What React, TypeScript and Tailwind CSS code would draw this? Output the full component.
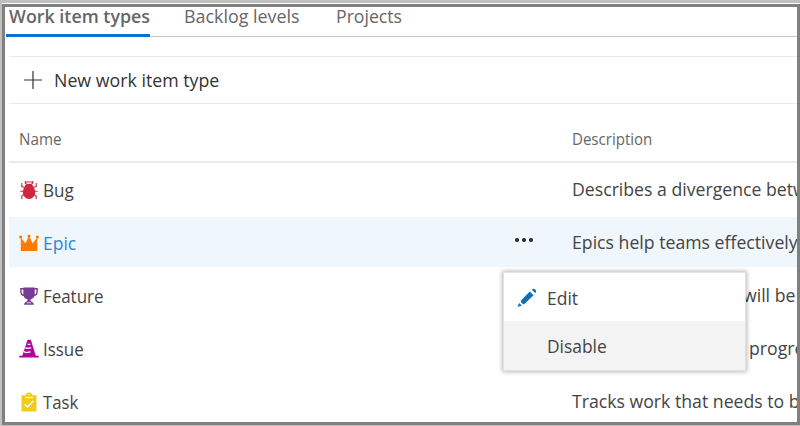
import type { ReactNode } from "react";

function BugIcon() {
  return (
    <svg viewBox="0 0 18 20" className="h-5 w-[18px]" fill="none" stroke="#cc293d" strokeWidth="1.1">
      <path d="M5.3 1v2.2l1.7 1.3M12.7 1v2.2L11 4.5M5.3 2h7.4M5 7.6 1.8 6.5V3M13 7.6l3.2-1.1V3M4 11.2H.3M14 11.2h3.7M4.2 14.2 1.8 16v3M13.8 14.2l2.4 1.8v3" />
      <path d="M4.6 6.8C5 2.6 13 2.6 13.4 6.8Z" fill="#cc293d" stroke="none" />
      <ellipse cx="9" cy="12" rx="6.2" ry="7" fill="#cc293d" stroke="none" />
    </svg>
  );
}

function CrownIcon() {
  return (
    <svg viewBox="0 0 20 18" className="h-[18px] w-5" fill="#ff7b00">
      <path d="M1.8 17V3.5L6.4 9.5 10 1.8l3.6 7.7 4.6-6V17Z" />
      <circle cx="1.6" cy="3" r="1.5" />
      <circle cx="10" cy="2" r="1.5" />
      <circle cx="18.4" cy="3" r="1.5" />
    </svg>
  );
}

function TrophyIcon() {
  return (
    <svg viewBox="0 0 18 18" className="h-[18px] w-[18px]" fill="#773b93">
      <path d="M3.3.5h11.4v6.2c0 3.6-2 5-4.2 5.6v1.2c0 1 3.4 1.4 3.4 4.2H4.1c0-2.8 3.4-3.2 3.4-4.2v-1.2c-2.2-.6-4.2-2-4.2-5.6Z" />
      <path d="M4 1.8H.9v2.7c0 2.6 1.7 4 4.2 4M14 1.8h3.1v2.7c0 2.6-1.7 4-4.2 4" fill="none" stroke="#773b93" strokeWidth="1.4" />
      <path d="M6.8 15.8h4.4" stroke="#fff" strokeWidth=".8" />
    </svg>
  );
}

function ConeIcon() {
  return (
    <svg viewBox="0 0 20 19" className="h-[19px] w-5" fill="#b4009e">
      <path d="M8.6.7h3.2L16.8 16.8h2.9v1.6H.3v-1.6h3Z" />
      <path d="M8.6 5.4h2.8M6.4 8.6l1.6.8 4.2-.6M5 12.6l2 1 4.6-.8" fill="none" stroke="#fff" strokeWidth="1.2" />
    </svg>
  );
}

function ClipboardIcon() {
  return (
    <svg viewBox="0 0 16 20" className="h-5 w-4">
      <path d="M.5 3.2H4.5C5 1.7 6 .5 8 .5s3 1.2 3.5 2.7h4v16.3H.5Z" fill="#f2cb1d" />
      <path d="M4.3 5.6h7.4M7.3 3h1.4" stroke="#fff" strokeWidth="1" />
      <path d="m3.8 12.3 2.8 2.8 5.6-6" fill="none" stroke="#fff" strokeWidth="1.4" />
    </svg>
  );
}

function PencilIcon() {
  return (
    <svg viewBox="0 0 20 20" className="h-5 w-5" fill="#106ebe">
      <path d="M12.8 3.4 16.6 7.2 7.4 16c-1.2 1.1-4.5-2.2-3.4-3.4Z" />
      <path d="m14.9 1.9.7-.7c1.5-1.3 4.5 1.6 3.3 3.1l-.7.8ZM2.2 15l2.6 2.6-3.6 1.2c-.4.1-.6-.1-.5-.5Z" />
    </svg>
  );
}

type RowProps = { icon: ReactNode; name: ReactNode; description?: ReactNode; selected?: boolean };

function Row({ icon, name, description, selected }: RowProps) {
  return (
    <div className={`flex h-[53px] shrink-0 items-center border-t border-b-2 border-transparent bg-clip-padding ${selected ? "bg-[#eff6fc]" : ""}`}>
      <div className="ml-[8.5px] flex w-[22px] shrink-0 justify-center pt-px">{icon}</div>
      <div className={`ml-[3px] w-[472.5px] shrink-0 pt-[2px] ${selected ? "text-[#2b88d8]" : ""}`}>{name}</div>
      <div className="w-[57px] shrink-0">
        {selected && (
          <div className="mb-1 flex gap-[3px]">
            <i className="size-1 rounded-full bg-[#222]" />
            <i className="size-1 rounded-full bg-[#222]" />
            <i className="size-1 rounded-full bg-[#222]" />
          </div>
        )}
      </div>
      <div>{description}</div>
    </div>
  );
}

export default function App() {
  return (
    <div className="h-[426px] w-[800px] overflow-hidden bg-[#c0c0c0] pt-[3px] pl-[2px] font-['Open_Sans','Noto_Sans',sans-serif] text-[19px] leading-6 whitespace-nowrap text-[#444]">
      <div className="h-[422px] border-t border-white">
        <div className="relative flex h-[421px] flex-col overflow-hidden border-[3px] border-[#808080] bg-white">
          <div className="ml-px flex h-[30px] shrink-0 items-start border-b border-[#c8c8c8] text-[18.5px] text-[#666]">
            <div className="flex h-[30px] w-[144px] shrink-0 items-start border-b-[3px] border-[#0f6fd0] pl-[3px]">
              <span className="-mt-[3px] inline-block origin-left scale-x-[0.965] font-semibold">Work item types</span>
            </div>
            <span className="-mt-[3px] ml-[34px] inline-block w-[152px]"><span className="inline-block origin-left scale-x-[0.965]">Backlog levels</span></span>
            <span className="-mt-[3px] inline-block origin-left scale-x-[0.955]">Projects</span>
          </div>
          <div className="mt-[19px] ml-1 flex h-12 shrink-0 items-center border-y border-[#eaeaea] pl-[14px]">
            <svg viewBox="0 0 20 20" className="size-5" stroke="#333" strokeWidth="1.2"><path d="M1 10h18M10 1v18" /></svg>
            <span className="ml-[11px] inline-block origin-left scale-x-[0.935] text-[#333]">New work item type</span>
          </div>
          <div className="ml-1 flex h-[59px] shrink-0 items-center border-b-2 border-[#eaeaea] pt-3 pl-[10px] text-[16px] text-[#666]">
            <div className="w-[553px]"><span className="inline-block origin-left scale-x-[0.95]">Name</span></div>
            <span className="inline-block origin-left scale-x-[0.94]">Description</span>
          </div>
          <div className="ml-1 flex flex-col">
            <Row icon={<BugIcon />} name={<span className="inline-block origin-left scale-x-[0.9]">Bug</span>} description={<span className="inline-block origin-left scale-x-[0.93]">Describes a divergence between</span>} />
            <Row selected icon={<CrownIcon />} name={<span className="inline-block origin-left scale-x-[0.92]">Epic</span>} description={<span className="inline-block origin-left scale-x-[0.93]">Epics help teams effectively</span>} />
            <Row icon={<TrophyIcon />} name={<span className="inline-block origin-left scale-x-[0.89]">Feature</span>} description={<span className="ml-[171px] inline-block origin-left scale-x-[0.93]">will be</span>} />
            <Row icon={<ConeIcon />} name={<span className="inline-block origin-left scale-x-[0.89]">Issue</span>} description={<span className="ml-[177px] inline-block origin-left scale-x-[0.93]">progress</span>} />
            <Row icon={<ClipboardIcon />} name={<span className="inline-block origin-left scale-x-[0.88]">Task</span>} description={<span className="inline-block origin-left scale-x-[0.93]">Tracks work that needs to be</span>} />
          </div>
          <div className="absolute top-[265px] left-[498px] h-[99px] w-[243px] border border-[#e2e2e2] bg-white shadow-[0_0_4px_1px_rgba(0,0,0,0.28)]">
            <div className="flex h-12 items-center pt-px pl-[13px]">
              <PencilIcon />
              <span className="ml-[10px] inline-block origin-left scale-x-[0.92]">Edit</span>
            </div>
            <div className="flex h-[49px] items-center bg-[#f3f3f3] pl-[43px]">
              <span className="inline-block origin-left scale-x-[0.915]">Disable</span>
            </div>
          </div>
        </div>
      </div>
    </div>
  );
}
